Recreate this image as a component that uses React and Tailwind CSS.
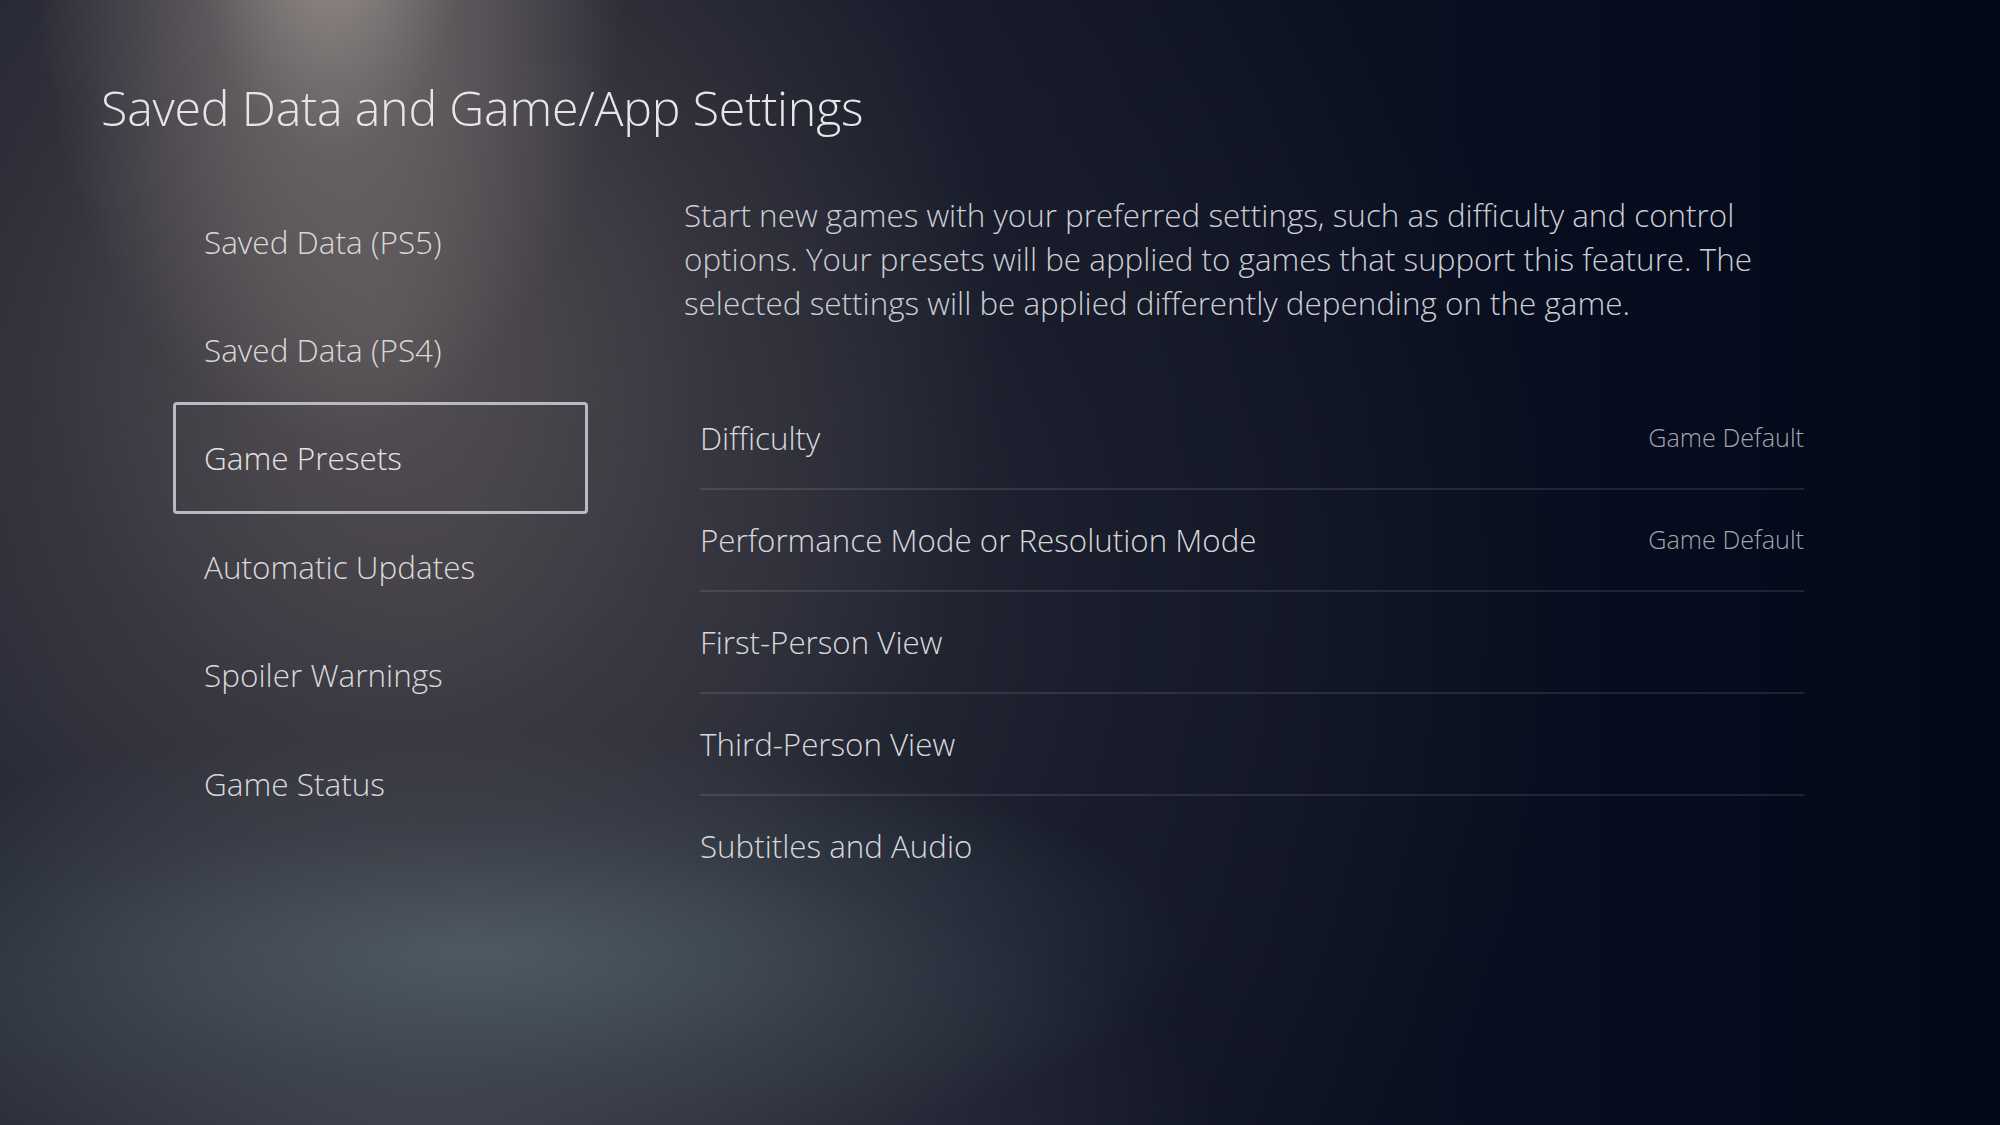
import React from "react";

const menu = [
  "Saved Data (PS5)",
  "Saved Data (PS4)",
  "Game Presets",
  "Automatic Updates",
  "Spoiler Warnings",
  "Game Status",
];

const rows = [
  { label: "Difficulty", value: "Game Default" },
  { label: "Performance Mode or Resolution Mode", value: "Game Default" },
  { label: "First-Person View" },
  { label: "Third-Person View" },
  { label: "Subtitles and Audio" },
];

export default function App() {
  return (
    <div className="w-[2000px] h-[1125px] overflow-hidden font-['Open_Sans',sans-serif] font-light bg-[radial-gradient(ellipse_300px_520px_at_330px_-80px,rgba(182,172,164,0.8),rgba(150,140,136,0.4)_45%,transparent_100%),radial-gradient(ellipse_620px_720px_at_380px_330px,rgba(100,92,92,0.75),rgba(74,68,74,0.45)_55%,transparent_100%),radial-gradient(ellipse_720px_220px_at_470px_950px,rgba(84,100,108,0.85),rgba(70,82,92,0.4)_60%,transparent_100%),radial-gradient(ellipse_800px_280px_at_420px_1125px,rgba(72,72,84,0.75),transparent_100%),radial-gradient(ellipse_1150px_950px_at_450px_600px,rgba(54,56,66,0.9),rgba(32,36,48,0.5)_60%,transparent_100%),linear-gradient(90deg,#1c2030_0%,#141828_45%,#070c1e_80%,#030819_100%)]">
      <h1 className="pl-[101px] pt-[78px] text-[48.3px] leading-[58px] text-[#e6e6e8] tracking-[-0.2px]">
        Saved Data and Game/App Settings
      </h1>
      <div className="flex mt-[51px]">
        <div className="ml-[173px] w-[415px] flex flex-col">
          {menu.map((m) => (
            <div
              key={m}
              className={
                m === "Game Presets"
                  ? "h-[112px] -my-[2px] flex items-center pl-[28px] border-[3px] border-[#b6bac2] rounded-[4px] text-[31.5px] text-[#e2e2e4]"
                  : "h-[108.5px] flex items-center pl-[31px] text-[31.5px] text-[#d8d8da]"
              }
            >
              {m}
            </div>
          ))}
        </div>
        <div className="ml-[96px] w-[1120px] flex flex-col">
          <p className="text-[31.4px] leading-[44px] text-[#cbced4] mt-[6px]">
            Start new games with your preferred settings, such as difficulty and control
            <br />
            options. Your presets will be applied to games that support this feature. The
            <br />
            selected settings will be applied differently depending on the game.
          </p>
          <div className="ml-[16px] w-[1104px] mt-[63px] flex flex-col">
            {rows.map((r, i) => (
              <div key={r.label} className="flex flex-col">
                <div className="h-[100px] flex items-center justify-between">
                  <span className="text-[31.3px] text-[#d6d8dc]">{r.label}</span>
                  {r.value && (
                    <span className="text-[25.2px] text-[#a2a6ae]">{r.value}</span>
                  )}
                </div>
                {i < rows.length - 1 ? (
                  <div className="h-[2px] bg-white/10" />
                ) : null}
              </div>
            ))}
          </div>
        </div>
      </div>
    </div>
  );
}
